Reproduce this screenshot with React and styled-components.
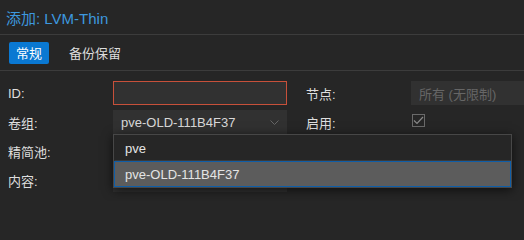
import { createGlobalStyle } from "styled-components";
import styled from "styled-components";

const GlobalStyle = createGlobalStyle`
  html, body {
    margin: 0;
    padding: 0;
    background: #262626;
    overflow: hidden;
  }
  body {
    font-family: "Liberation Sans", "Noto Sans CJK SC", sans-serif;
    font-size: 13px;
    color: #e0e0e0;
  }
`;

const Window = styled.div`
  position: relative;
  width: 524px;
  height: 201px;
  background: #262626;
  overflow: hidden;
`;

const Header = styled.div`
  height: 34px;
  display: flex;
  align-items: center;
  padding-left: 6px;
  border-bottom: 1px solid #3c3c3c;
  color: #3d98de;
  font-size: 15px;
`;

const TabBar = styled.div`
  height: 35px;
  display: flex;
  align-items: center;
  gap: 13px;
  padding-left: 9px;
  border-bottom: 1px solid #3c3c3c;
`;

const Tab = styled.div`
  height: 22px;
  display: flex;
  align-items: center;
  padding: 0 7px;
  border-radius: 2px;
  background: ${(p) => (p.active ? "#0a78d2" : "transparent")};
  color: ${(p) => (p.active ? "#fff" : "#dcdcdc")};
  font-size: 13px;
`;

const Form = styled.div`
  display: grid;
  grid-template-columns: 279px 279px;
  column-gap: 19px;
  padding: 10px 0 0 8px;
`;

const Column = styled.div`
  display: flex;
  flex-direction: column;
  gap: 5px;
`;

const Row = styled.div`
  height: 24px;
  display: flex;
  align-items: center;
`;

const Label = styled.div`
  width: 105px;
  flex: none;
  color: #dedede;
`;

const Field = styled.div`
  width: 174px;
  height: 24px;
  box-sizing: border-box;
  display: flex;
  align-items: center;
  padding: 0 7px;
  background: #313131;
  border: 1px solid ${(p) => (p.invalid ? "#c7503a" : "transparent")};
  color: ${(p) => (p.disabled ? "#666" : "#d8d8d8")};
  position: relative;
`;

const Chevron = styled.svg`
  position: absolute;
  right: 7px;
  top: 9px;
`;

const Checkbox = styled.div`
  width: 13px;
  height: 13px;
  box-sizing: border-box;
  border: 1px solid #6a6a6a;
  margin: -3px 0 0 1px;
  display: flex;
  align-items: center;
  justify-content: center;
`;

const Dropdown = styled.div`
  position: absolute;
  left: 113px;
  top: 134px;
  width: 399px;
  box-sizing: border-box;
  background: #262626;
  border: 1px solid #474747;
  box-shadow: 0 2px 10px rgba(0, 0, 0, 0.65);
`;

const Option = styled.div`
  height: 26px;
  box-sizing: border-box;
  display: flex;
  align-items: center;
  padding-left: 10px;
  font-size: 13px;
  color: #e4e4e4;
  background: ${(p) => (p.selected ? "#5c5c5c" : "transparent")};
  border: 1px solid ${(p) => (p.selected ? "#0f5ea8" : "transparent")};
  border-bottom-color: ${(p) => (p.selected ? "#0f5ea8" : "#3a3a3a")};
`;

export default function App() {
  return (
    <Window>
      <GlobalStyle />
      <Header>添加: LVM-Thin</Header>
      <TabBar>
        <Tab active>常规</Tab>
        <Tab>备份保留</Tab>
      </TabBar>
      <Form>
        <Column>
          <Row>
            <Label>ID:</Label>
            <Field invalid />
          </Row>
          <Row>
            <Label>卷组:</Label>
            <Field>
              pve-OLD-111B4F37
              <Chevron width="9" height="6" viewBox="0 0 9 6">
                <path d="M0.5 0.5 L4.5 4.5 L8.5 0.5" fill="none" stroke="#666" strokeWidth="1" />
              </Chevron>
            </Field>
          </Row>
          <Row>
            <Label>精简池:</Label>
            <Field />
          </Row>
          <Row>
            <Label>内容:</Label>
            <Field />
          </Row>
        </Column>
        <Column>
          <Row>
            <Label>节点:</Label>
            <Field disabled>所有 (无限制)</Field>
          </Row>
          <Row>
            <Label>启用:</Label>
            <Checkbox>
              <svg width="11" height="9" viewBox="0 0 11 9">
                <path d="M1 4.5 L4 7.5 L10 1" fill="none" stroke="#8a8a8a" strokeWidth="1.2" />
              </svg>
            </Checkbox>
          </Row>
        </Column>
      </Form>
      <Dropdown>
        <Option>pve</Option>
        <Option selected>pve-OLD-111B4F37</Option>
      </Dropdown>
    </Window>
  );
}
